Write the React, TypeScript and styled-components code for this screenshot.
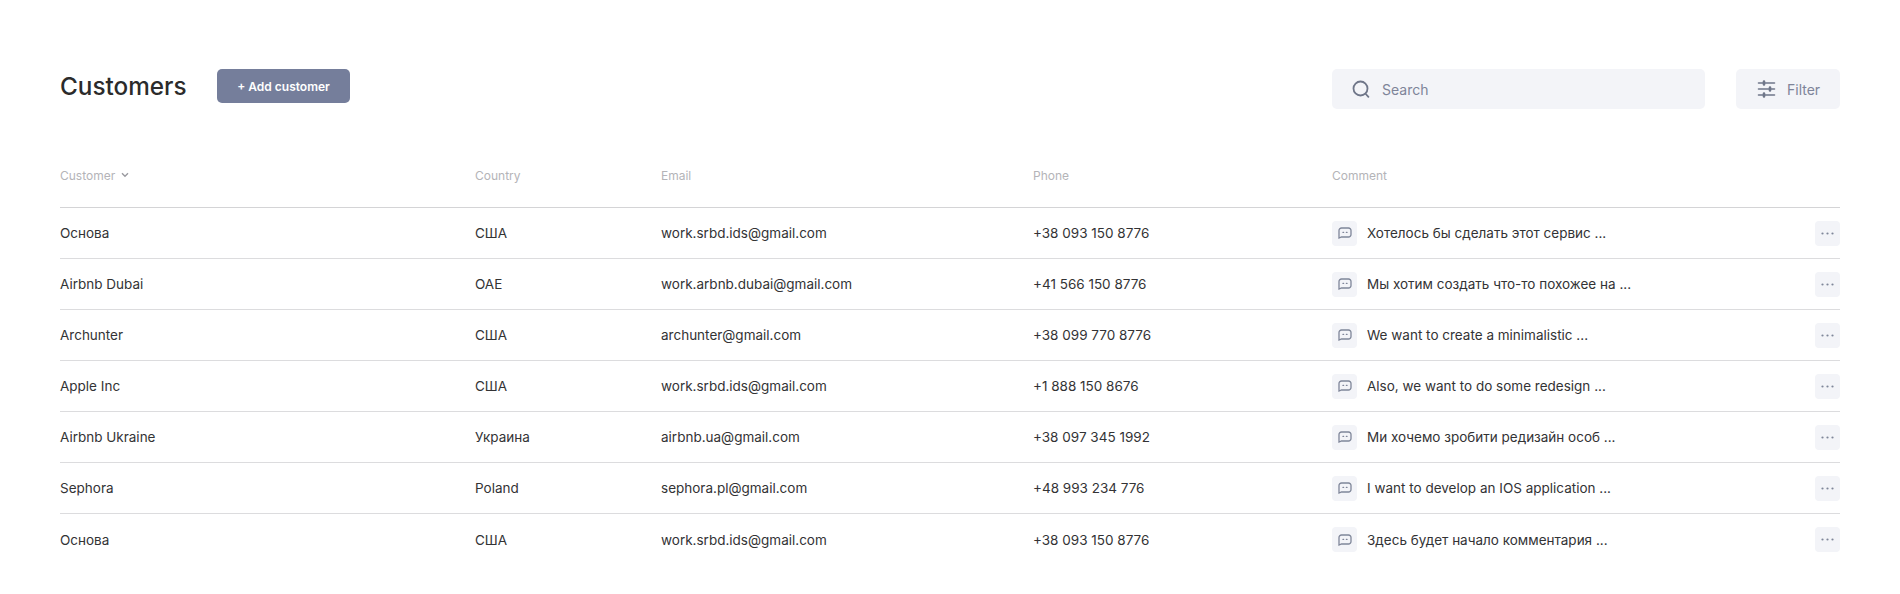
import React from 'react'
import styled, { createGlobalStyle } from 'styled-components'

const GlobalStyle = createGlobalStyle`
  html, body {
    margin: 0;
    padding: 0;
    background: #fff;
    font-family: "Inter", "Roboto", "Liberation Sans", sans-serif;
  }
`

const Page = styled.main`
  padding: 69px 60px 0;
  height: 594px;
  box-sizing: border-box;
  overflow: hidden;
`

const Toolbar = styled.header`
  display: flex;
  align-items: flex-start;
  height: 40px;
`

const Title = styled.h1`
  margin: 0 31px 0 0;
  width: 126px;
  font-size: 24.3px;
  line-height: 34px;
  font-weight: 500;
  color: #2b2b2b;
  white-space: nowrap;
`

const AddButton = styled.button`
  width: 133px;
  height: 34px;
  padding: 0;
  border: 0;
  border-radius: 5px;
  background: #757e9b;
  color: #fff;
  font: 600 12px "Inter", sans-serif;
`

const SearchBox = styled.div`
  display: flex;
  align-items: center;
  gap: 12px;
  width: 373px;
  height: 40px;
  margin-left: auto;
  padding-left: 20px;
  box-sizing: border-box;
  border-radius: 5px;
  background: #f3f4f8;
  color: #7e8499;
  font-size: 14px;
`

const FilterButton = styled.button`
  display: flex;
  align-items: center;
  gap: 11px;
  width: 104px;
  height: 40px;
  margin-left: 31px;
  padding: 0 0 0 21px;
  border: 0;
  border-radius: 5px;
  background: #f3f4f8;
  color: #7e8499;
  font: 400 14px "Inter", sans-serif;
`

const Row = styled.div<{ $head?: boolean }>`
  display: grid;
  grid-template-columns: 415px 186px 372px 299px 1fr 25px;
  align-items: center;
  height: ${p => (p.$head ? '65px' : '51px')};
  box-sizing: border-box;
  border-bottom: ${p => (p.$head ? '1px solid #d4d4d6' : '1px solid #dcdcde')};
  color: #333335;
  font-size: 13.5px;

  &:last-child {
    border-bottom: 0;
  }
`

const Table = styled.section`
  margin-top: 34px;
`

const HeadCell = styled.span`
  display: flex;
  align-items: center;
  gap: 6px;
  color: #b4b4b8;
  font-size: 12px;
`

const CommentCell = styled.span`
  display: flex;
  align-items: center;
  gap: 10px;
`

const CommentIcon = styled.span`
  display: flex;
  align-items: center;
  justify-content: center;
  width: 25px;
  height: 25px;
  border-radius: 4px;
  background: #f3f4f8;
`

const MoreButton = styled.button`
  display: flex;
  align-items: center;
  justify-content: center;
  width: 25px;
  height: 25px;
  padding: 0;
  border: 0;
  border-radius: 4px;
  background: #f3f4f8;
`

const customers = [
  ['Основа', 'США', 'work.srbd.ids@gmail.com', '+38 093 150 8776', 'Хотелось бы сделать этот сервис ...'],
  ['Airbnb Dubai', 'ОАЕ', 'work.arbnb.dubai@gmail.com', '+41 566 150 8776', 'Мы хотим создать что-то похожее на ...'],
  ['Archunter', 'США', 'archunter@gmail.com', '+38 099 770 8776', 'We want to create a minimalistic ...'],
  ['Apple Inc', 'США', 'work.srbd.ids@gmail.com', '+1 888 150 8676', 'Also, we want to do some redesign ...'],
  ['Airbnb Ukraine', 'Украина', 'airbnb.ua@gmail.com', '+38 097 345 1992', 'Ми хочемо зробити редизайн особ ...'],
  ['Sephora', 'Poland', 'sephora.pl@gmail.com', '+48 993 234 776', 'I want to develop an IOS application ...'],
  ['Основа', 'США', 'work.srbd.ids@gmail.com', '+38 093 150 8776', 'Здесь будет начало комментария ...'],
]

const App = () => (
  <Page>
    <GlobalStyle />
    <Toolbar>
      <Title>Customers</Title>
      <AddButton>+ Add customer</AddButton>
      <SearchBox>
        <svg width="18" height="18" viewBox="0 0 18 18" fill="none" stroke="#6f7689" strokeWidth="1.8" strokeLinecap="round">
          <circle cx="8.5" cy="8.5" r="7" />
          <path d="M13.8 14l2.6 2.8" />
        </svg>
        Search
      </SearchBox>
      <FilterButton>
        <svg width="19" height="18" viewBox="0 0 19 18" fill="#6f7689" stroke="#6f7689" strokeWidth="1.6" strokeLinecap="round">
          <path d="M1.5 3h16M1.5 9h16M1.5 15h16" />
          <path d="M7 1.5v3M13 7.5v3M7 13.5v3" strokeWidth="2.6" />
        </svg>
        Filter
      </FilterButton>
    </Toolbar>
    <Table>
      <Row $head>
        <HeadCell>
          Customer
          <svg width="8" height="6" viewBox="0 0 8 6" fill="none" stroke="#9a9aa0" strokeWidth="1.4">
            <path d="M1 1.2l3 3 3-3" />
          </svg>
        </HeadCell>
        <HeadCell>Country</HeadCell>
        <HeadCell>Email</HeadCell>
        <HeadCell>Phone</HeadCell>
        <HeadCell>Comment</HeadCell>
        <span />
      </Row>
      {customers.map((c, i) => (
        <Row key={i}>
          <span>{c[0]}</span>
          <span>{c[1]}</span>
          <span>{c[2]}</span>
          <span>{c[3]}</span>
          <CommentCell>
            <CommentIcon>
              <svg width="14" height="12" viewBox="0 0 14 12" fill="none" stroke="#7f8699" strokeWidth="1.3">
                <path d="M3.5 1h7A2.5 2.5 0 0 1 13 3.5v4A2.5 2.5 0 0 1 10.5 10h-7L1 11V3.5A2.5 2.5 0 0 1 3.5 1z" />
                <path d="M5 5.4h.6M8.4 5.4H9" strokeLinecap="round" />
              </svg>
            </CommentIcon>
            {c[4]}
          </CommentCell>
          <MoreButton>
            <svg width="13" height="3" viewBox="0 0 13 3" fill="#7f8699">
              <circle cx="1.5" cy="1.5" r="1.1" />
              <circle cx="6.5" cy="1.5" r="1.1" />
              <circle cx="11.5" cy="1.5" r="1.1" />
            </svg>
          </MoreButton>
        </Row>
      ))}
    </Table>
  </Page>
)

export default App
